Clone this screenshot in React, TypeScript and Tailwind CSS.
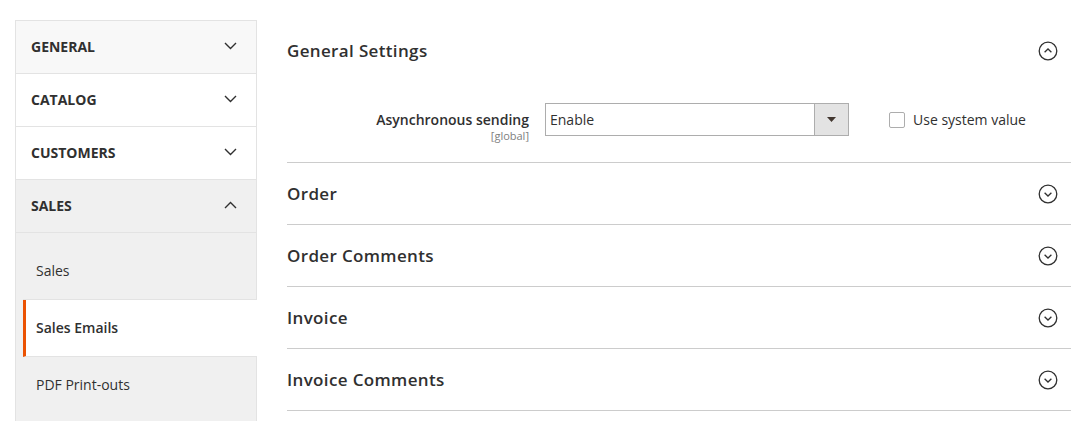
import React from "react";

const Chevron = ({ up = false }: { up?: boolean }) => (
  <svg width="13" height="8" viewBox="0 0 13 8" fill="none" className="shrink-0">
    {up ? (
      <polyline points="1,7 6.5,1.5 12,7" stroke="#303030" strokeWidth="1.4" fill="none" />
    ) : (
      <polyline points="1,1 6.5,6.5 12,1" stroke="#303030" strokeWidth="1.4" fill="none" />
    )}
  </svg>
);

const CircleChevron = ({ up = false }: { up?: boolean }) => (
  <svg width="20" height="20" viewBox="0 0 20 20" fill="none" className="shrink-0">
    <circle cx="10" cy="10" r="8.8" stroke="#303030" strokeWidth="1.3" fill="none" />
    {up ? (
      <polyline points="6.6,11.3 10,8 13.4,11.3" stroke="#303030" strokeWidth="1.3" fill="none" />
    ) : (
      <polyline points="6.6,8.7 10,12 13.4,8.7" stroke="#303030" strokeWidth="1.3" fill="none" />
    )}
  </svg>
);

const NavTitle = ({ label, bg, up = false }: { label: string; bg: string; up?: boolean }) => (
  <div className={`flex h-[53px] items-center justify-between border-b border-[#e3e3e3] pb-[2px] pl-[15px] pr-[19px] ${bg}`}>
    <span className="text-[14px] font-bold uppercase text-[#303030]">{label}</span>
    <Chevron up={up} />
  </div>
);

const Section = ({ title }: { title: string }) => (
  <div className="flex h-[62px] items-center justify-between border-b border-[#cccccc] pr-[13px]">
    <span className="text-[17px] font-semibold tracking-[0.35px] text-[#303030]">{title}</span>
    <CircleChevron />
  </div>
);

export default function App() {
  return (
    <div
      className="flex min-h-[421px] bg-white pl-[15px] pt-[20px] pr-[21px]"
      style={{ fontFamily: '"Open Sans", "Noto Sans", sans-serif' }}
    >
      <aside className="w-[242px] shrink-0 border-x border-t border-[#e3e3e3] self-start">
        <NavTitle label="General" bg="bg-[#f8f8f8]" />
        <NavTitle label="Catalog" bg="bg-white" />
        <NavTitle label="Customers" bg="bg-white" />
        <NavTitle label="Sales" bg="bg-[#f0f0f0]" up />
        <div className="bg-[#f0f0f0] pt-[10px] pb-[20px]">
          <div className="ml-[7px] flex h-[57px] items-center border-b border-[#e3e3e3] pb-[2px] pl-[13px] text-[14px] text-[#303030]">
            Sales
          </div>
          <div className="ml-[7px] mr-[-1px] flex h-[57px] items-center border-b border-l-[3px] border-[#e3e3e3] border-l-[#eb5202] bg-white pb-[2px] pl-[10px] text-[14px] font-semibold text-[#303030]">
            Sales Emails
          </div>
          <div className="ml-[7px] flex h-[57px] items-center pb-[2px] pl-[13px] text-[14px] text-[#303030]">
            PDF Print-outs
          </div>
        </div>
      </aside>
      <main className="ml-[30px] flex-1">
        <div className="border-b border-[#cccccc] pb-[19px]">
          <div className="flex h-[61px] items-center justify-between pr-[13px]">
            <span className="text-[17px] font-semibold tracking-[0.35px] text-[#303030]">General Settings</span>
            <CircleChevron up />
          </div>
          <div className="mt-[22px] flex items-start">
            <div className="flex w-[242px] flex-col items-end pt-[8px]">
              <span className="text-[14px] font-semibold leading-[18px] text-[#303030]">Asynchronous sending</span>
              <span className="text-[11px] leading-[14px] text-[#808080]">[global]</span>
            </div>
            <div className="ml-[16px] flex h-[33px] w-[304px] items-stretch border border-[#adadad] bg-white">
              <span className="flex flex-1 items-center pl-[4px] text-[14px] text-[#303030]">Enable</span>
              <span className="flex w-[34px] items-center justify-center border-l border-[#adadad] bg-[#e3e3e3]">
                <svg width="9" height="6" viewBox="0 0 9 6">
                  <polygon points="0,0 9,0 4.5,5" fill="#41362f" />
                </svg>
              </span>
            </div>
            <label className="ml-[40px] flex h-[33px] items-center">
              <span className="h-[16px] w-[16px] rounded-[2px] border border-[#adadad] bg-white" />
              <span className="ml-[8px] text-[14px] text-[#303030]">Use system value</span>
            </label>
          </div>
        </div>
        <Section title="Order" />
        <Section title="Order Comments" />
        <Section title="Invoice" />
        <Section title="Invoice Comments" />
      </main>
    </div>
  );
}
